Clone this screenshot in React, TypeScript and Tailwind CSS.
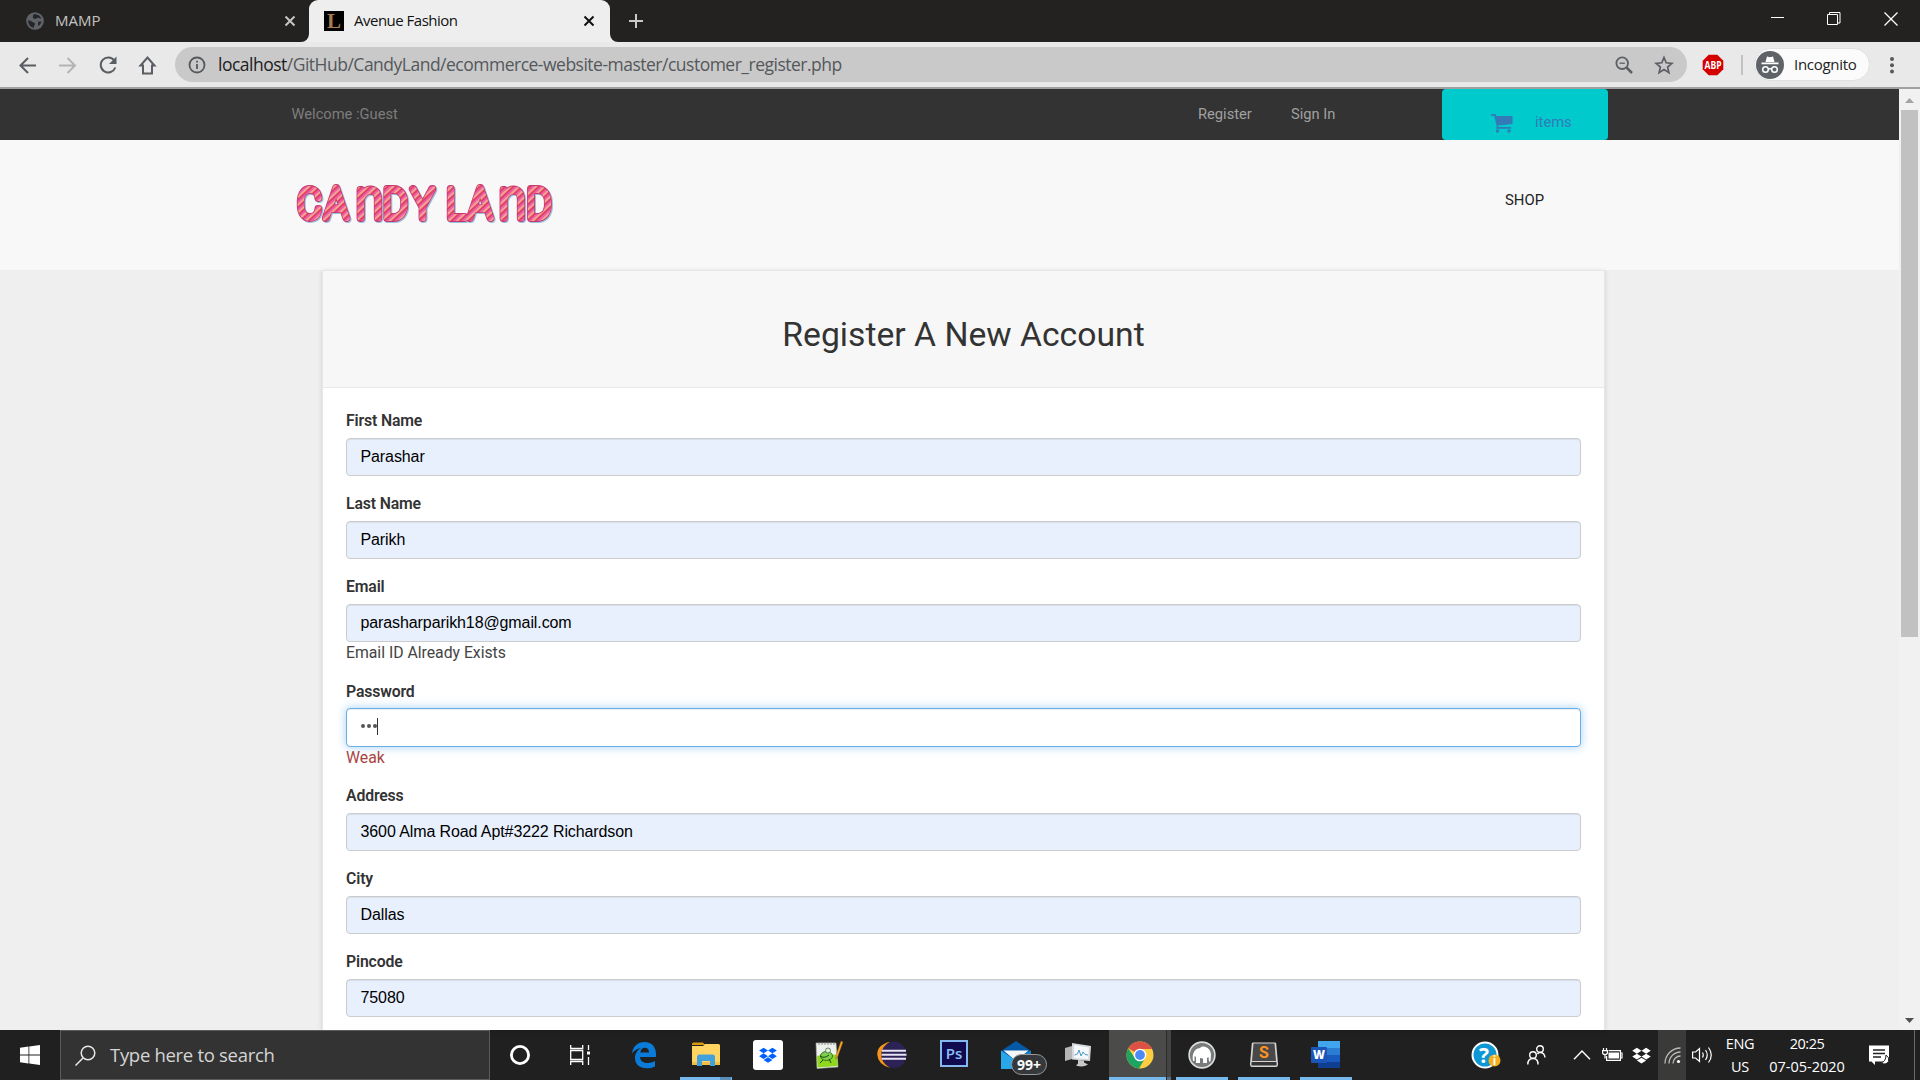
import React from "react";

type P = { children?: React.ReactNode };

const UI = "font-['Open_Sans','Noto_Sans',sans-serif]";

function LogoWords({ hidden }: { hidden?: boolean }) {
  return (
    <g transform="scale(0.9 1)" aria-hidden={hidden}>
      <text y="56.500" x="6.300 36.500 71 101.500 133"><tspan>C</tspan><tspan fontSize="42.500">A</tspan><tspan fontSize="54">n</tspan><tspan>DY</tspan></text>
      <text y="56.500" x="172 196.500 230 261"><tspan>L</tspan><tspan fontSize="42.500">A</tspan><tspan fontSize="54">n</tspan><tspan>D</tspan></text>
    </g>
  );
}

function Logo() {
  return (
    <svg width="270" height="84" viewBox="0 0 270 84" className="block" aria-label="Candy Land">
      <defs>
        <pattern id="candy" width="6" height="6" patternUnits="userSpaceOnUse" patternTransform="rotate(50)">
          <rect width="6" height="6" fill="#ee5fa6" />
          <rect width="2.4" height="6" fill="#f7a493" />
          <rect x="2.4" width="1.2" height="6" fill="#d3243f" />
        </pattern>
        <filter id="glow" x="-5%" y="-10%" width="112%" height="125%">
          <feDropShadow dx="1" dy="1" stdDeviation="0.6" floodColor="#7fb6dd" floodOpacity="0.8" />
        </filter>
      </defs>
      <g fontFamily="Roboto, sans-serif" fontWeight="100" fontSize="40.500" strokeLinejoin="round" strokeLinecap="round" filter="url(#glow)">
        <g fill="#c4386f" stroke="#c4386f" strokeWidth="7.800">
          <LogoWords />
        </g>
        <g fill="url(#candy)" stroke="url(#candy)" strokeWidth="6">
          <LogoWords hidden />
        </g>
      </g>
    </svg>
  );
}

function CloseX({ color }: { color: string }) {
  return (
    <svg width="12" height="12" viewBox="0 0 12 12" fill="none" stroke={color} strokeWidth="2">
      <path d="M1.5 1.5l9 9M10.5 1.5l-9 9" />
    </svg>
  );
}

function TabStrip() {
  return (
    <div className="flex h-[42px] bg-[#232220]">
      <div className="flex h-[42px] w-[309px] items-center pl-[26px] pr-[13px]">
        <svg width="18" height="18" viewBox="0 0 18 18">
          <circle cx="9" cy="9" r="8.8" fill="#5f6368" />
          <path d="M8 2.2c3-.4 6 1.2 7.2 4-1.6.6-2.2-.4-3.600-.4-1 0-1 1.200-2.400 1.200-1.600 0-2.400-1.200-2.400-2.400S7.200 3 8 2.200zM2 8.500c1.600 0 3.600.4 4.200 1.600 1.400.2 2.800.8 2.800 2 0 1.400-1.200 1.400-1.200 3.700C4.500 15.200 2 12.200 2 8.500zM12.500 9.500c1 .2 2.200.2 3 0-.3 1.800-1.500 3.500-3 4.500-.4-1.400-.8-3.500 0-4.500z" fill="#25262a" />
        </svg>
        <span className="ml-[11px] flex-1 pb-[2px] text-[15px] text-[#c3c3c3]">MAMP</span>
        <CloseX color="#c5c5c5" />
      </div>
      <div className="relative flex h-[42px] w-[301px] items-center rounded-t-[9px] bg-[#eeeeee] pl-[15px] pr-[15px]">
        <svg className="absolute -left-[8px] bottom-0" width="8" height="8" viewBox="0 0 8 8"><path d="M8 0v8H0a8 8 0 0 0 8-8z" fill="#eeeeee" /></svg>
        <svg className="absolute -right-[8px] bottom-0" width="8" height="8" viewBox="0 0 8 8"><path d="M0 0v8h8a8 8 0 0 1-8-8z" fill="#eeeeee" /></svg>
        <span className="flex h-5 w-5 items-center justify-center bg-black font-['Liberation_Serif',serif] text-[21px] font-bold leading-5 text-[#a97c50]">L</span>
        <span className="ml-[10px] flex-1 pb-[2px] text-[15px] tracking-[-0.5px] text-[#111]">Avenue Fashion</span>
        <CloseX color="#111111" />
      </div>
      <div className="flex items-center pl-[18px]">
        <svg width="16" height="16" viewBox="0 0 16 16" stroke="#c9c9c9" strokeWidth="2"><path d="M8 1v14M1 8h14" /></svg>
      </div>
      <div className="ml-auto flex h-[37px] items-center pr-[22px]">
        <svg width="14" height="14" viewBox="0 0 14 14"><path d="M0 5.500h13" stroke="#fff" /></svg>
        <svg className="ml-[42px]" width="14" height="14" viewBox="0 0 14 14" fill="none" stroke="#fff"><path d="M.5 2.500h10v10h-10zM2.500 2.500v-2h10.500v10.500h-2.500" /></svg>
        <svg className="ml-[43px]" width="14" height="14" viewBox="0 0 14 14" stroke="#fff" strokeWidth="1.300"><path d="M.5.5l13 13M13.500.5l-13 13" /></svg>
      </div>
    </div>
  );
}

function Toolbar() {
  return (
    <div className="flex h-[47px] items-start border-b-2 border-[#a0a0a0] bg-[#e9e9e9] pt-[5px]">
      <div className="flex h-[35px] w-[175px] items-center pl-[17px]">
        <svg width="144" height="24" viewBox="0 0 144 24" fill="none" strokeWidth="2">
          <path d="M19 12.500H4M11 5l-7.500 7.500L11 20" stroke="#5a5e63" />
          <path d="M42 12.500h16M50.500 5l7.500 7.500-7.500 7.500" stroke="#b3b3b3" />
          <path d="M97.300 7.500A7.500 7.500 0 1 0 98.300 14.500" stroke="#5a5e63" />
          <path d="M99.500 3.500v7.500H92z" fill="#5a5e63" />
          <path d="M123.500 12.500h2.500v8h9v-8h2.500l-7-8z" stroke="#5a5e63" />
        </svg>
      </div>
      <div className="flex h-[35px] w-[1512px] items-center rounded-full bg-[#c9c9c9] pl-[13px] pr-[13px]">
        <svg width="18" height="18" viewBox="0 0 18 18" fill="none" stroke="#55595d" strokeWidth="1.800"><circle cx="9" cy="9" r="7.500" /><path d="M9 8v5M9 4.700v1.800" /></svg>
        <span className="ml-[12px] flex-1 whitespace-nowrap text-[17.500px] tracking-[-0.5px] text-[#55585b]"><span className="text-[#1c1c1c]">localhost</span>/GitHub/CandyLand/ecommerce-website-master/customer_register.php</span>
        <svg width="18" height="18" viewBox="0 0 18 18" fill="none" stroke="#5c5f63" strokeWidth="1.800"><circle cx="7.200" cy="7.200" r="5.800" /><path d="M4.500 7.200h5.400" strokeWidth="1.300" /><path d="M11.500 11.500l5.500 5.500" strokeWidth="2.500" /></svg>
        <svg className="ml-[21px]" width="20" height="20" viewBox="0 0 20 20" fill="none" stroke="#5c5f63" strokeWidth="1.700"><path d="M10 2.500l2.200 5.300 5.700.5-4.300 3.700 1.300 5.600-4.900-3-4.900 3 1.300-5.600L2.100 8.300l5.700-.5z" /></svg>
      </div>
      <div className="flex h-[35px] items-center pl-[15px]">
        <svg width="22" height="22" viewBox="0 0 22 22"><path d="M6.700.8h8.600l6 6v8.400l-6 6H6.700l-6-6V6.800z" fill="#d40000" /><text x="11" y="14.700" textAnchor="middle" fontSize="10" fontWeight="700" fill="#fff" fontFamily="Open Sans" textLength="17" lengthAdjust="spacingAndGlyphs">ABP</text></svg>
        <span className="ml-[17px] h-5 w-[2px] bg-[#c2c2c2]" />
        <div className="ml-[11px] flex h-[33px] w-[116px] items-center rounded-full border border-[#e0e0e0] bg-[#fbfbfb] pl-[1px]">
          <svg width="28" height="28" viewBox="0 0 28 28"><circle cx="14" cy="14" r="14" fill="#5f6368" /><path d="M9.500 11l1.500-5.500 3 .8 3-.8L18.500 11zM5.500 11.600h17v1.600h-17z" fill="#fff" /><g fill="none" stroke="#fff" strokeWidth="1.500"><circle cx="9.500" cy="18.500" r="2.800" /><circle cx="18.500" cy="18.500" r="2.800" /><path d="M12.300 18.200q1.700-1 3.400 0" /></g></svg>
          <span className="ml-[10px] text-[15px] tracking-[-0.3px] text-[#222]">Incognito</span>
        </div>
        <svg className="ml-[18px]" width="8" height="20" viewBox="0 0 8 20" fill="#55595d"><circle cx="4" cy="4" r="2" /><circle cx="4" cy="10.200" r="2" /><circle cx="4" cy="16.400" r="2" /></svg>
      </div>
    </div>
  );
}

function Field({ label, value, note, noteColor }: { label: string; value: string; note?: string; noteColor?: string }) {
  return (
    <div className={note ? "h-[105px]" : "h-[83px]"}>
      <div className="h-[29px] pt-[1px] text-[15.800px] font-semibold leading-[21px] tracking-[-0.15px] text-[#333]">{label}</div>
      <div className="flex h-[38px] items-center rounded-[4px] border border-[#ccc] bg-[#e8f0fe] px-[13.500px] font-['Liberation_Sans',sans-serif] text-[16px] tracking-[-0.1px] text-black shadow-[inset_0_1px_1px_rgba(0,0,0,0.075)]">{value}</div>
      {note && <div className={noteColor + " text-[15.800px] leading-[21px] tracking-[-0.02px]"}>{note}</div>}
    </div>
  );
}

function PasswordField() {
  return (
    <div className="h-[104px]">
      <div className="h-[28px] pt-[1px] text-[15.800px] font-semibold leading-[21px] tracking-[-0.15px] text-[#333]">Password</div>
      <div className="flex h-[39px] items-center rounded-[4px] border border-[#66afe9] bg-white pl-[14px] shadow-[inset_0_1px_1px_rgba(0,0,0,0.075),0_0_10px_rgba(102,175,233,0.6)]">
        <div className="flex gap-[1.800px] pb-[3px]">
          <span className="h-[4px] w-[4px] rounded-full bg-[#555]" />
          <span className="h-[4px] w-[4px] rounded-full bg-[#555]" />
          <span className="h-[4px] w-[4px] rounded-full bg-[#555]" />
        </div>
        <span className="-mt-[2px] h-[17px] w-px bg-[#333]" />
      </div>
      <div className="text-[15.800px] leading-[21px] text-[#a94442]">Weak</div>
    </div>
  );
}

function Page() {
  return (
    <div className="flex h-[941px] font-[Roboto,sans-serif]">
      <div className="flex w-[1899px] flex-col bg-[#efefef]">
        <div className="flex h-[51px] shrink-0 bg-[#333] text-[14.700px]">
          <span className="w-[1198px] pl-[291.500px] pt-[14px] text-[#7d7d7d]">Welcome :Guest</span>
          <span className="w-[93px] pt-[14px] text-[#a0a0a0]">Register</span>
          <span className="w-[151px] pt-[14px] text-[#a0a0a0]">Sign In</span>
          <div className="flex h-[51px] w-[166px] items-start rounded-[4px] bg-[#00cacc] pl-[49px] text-[#337ab7]">
            <svg className="mt-[25px]" width="22" height="20" viewBox="0 0 22 20" fill="#337ab7"><path d="M0 0h4.500l.8 2H21.500v8L6.800 11.500l.4 1.500H20v1.800H5.200L5.700 12 3.200 1.800H0z" /><circle cx="6.500" cy="17" r="1.700" /><circle cx="18" cy="17" r="1.700" /></svg>
            <span className="ml-[22px] mt-[22px]">items</span>
          </div>
        </div>
        <div className="flex h-[130px] shrink-0 justify-between bg-[#f8f8f8]">
          <div className="pl-[292px] pt-[22px]"><Logo /></div>
          <span className="w-[394px] pt-[49px] text-[14.900px] leading-[22px] text-[#222]">SHOP</span>
        </div>
        <div className="ml-[322px] flex w-[1283px] flex-1 flex-col overflow-hidden border-x border-t border-[#e6e6e6] bg-white shadow-[0_1px_5px_rgba(0,0,0,0.12)]">
          <div className="flex h-[117px] shrink-0 items-center justify-center border-b border-[#e9e9e9] bg-[#f7f7f7] pt-[13px] text-[33.700px] text-[#333]">Register A New Account</div>
          <div className="px-[23px] pt-[21px]">
            <Field label="First Name" value="Parashar" />
            <Field label="Last Name" value="Parikh" />
            <Field label="Email" value="parasharparikh18@gmail.com" note="Email ID Already Exists" noteColor="text-[#444]" />
            <PasswordField />
            <Field label="Address" value="3600 Alma Road Apt#3222 Richardson" />
            <Field label="City" value="Dallas" />
            <Field label="Pincode" value="75080" />
          </div>
        </div>
      </div>
      <div className="flex w-[21px] flex-col items-center bg-[#f1f1f1]">
        <svg className="mt-[9px] shrink-0" width="9" height="5" viewBox="0 0 9 5"><path d="M0 5l4.500-5L9 5z" fill="#a3a3a3" /></svg>
        <div className="mt-[7px] h-[527px] w-[17px] bg-[#c1c1c1]" />
        <svg className="mt-auto mb-[7px]" width="9" height="5" viewBox="0 0 9 5"><path d="M0 0l4.500 5L9 0z" fill="#505050" /></svg>
      </div>
    </div>
  );
}

function Slot({ children, line, active }: P & { line?: boolean; active?: boolean }) {
  return (
    <div className={"relative flex h-[50px] w-[62px] items-center justify-center " + (active ? "bg-[#4b4b4a]" : "")}>
      {children}
      {line && <span className={"absolute bottom-0 h-[3px] bg-[#76b9ed] " + (active ? "inset-x-0" : "inset-x-[5px]")} />}
      {active && <span className="absolute inset-y-0 right-0 w-[5px] border-l border-[#2c2c2b] bg-[#3f3f3e]/60" />}
    </div>
  );
}

const dropboxPath = "M6 1l6 3.800-6 3.800L0 4.800zM18 1l6 3.800-6 3.800-6-3.800zM6 8.600l6 3.800-6 3.800-6-3.800zM18 8.600l6 3.800-6 3.800-6-3.800zM12 13.800l6 3.800-6 3.800-6-3.800z";

function TaskIcons() {
  return (
    <>
      <div className="flex w-[61px] items-center justify-center pr-[2px]"><svg width="22" height="22" viewBox="0 0 22 22"><circle cx="11" cy="11" r="8.600" fill="none" stroke="#fff" strokeWidth="2.800" /></svg></div>
      <div className="flex w-[62px] items-center justify-center pr-1"><svg width="20" height="20" viewBox="0 0 20 20" fill="none" stroke="#fff" strokeWidth="1.300"><path d="M.7 0v3.500h12V0M.7 5.500h12v9H.7zM.7 20v-3.500h12V20M18.500 0v5M18.500 12v8" /><path d="M17 6.500h3v3h-3z" fill="#fff" stroke="none" /></svg></div>
      <Slot><svg width="26" height="28" viewBox="0 0 26 28"><path d="M1 12.500C2 5 7 1 13.500 1 21 1 25 6 25 13v3H9c.3 4.500 4 6 7.500 6 3 0 5.500-.8 7.500-2v5.500c-2.500 1.300-5.500 1.800-8.500 1.800C8.500 27.300 4 23 4 17c0-4.500 2.500-8 6-10-4 .5-7 2.700-9 5.500zM9.300 11.500H18c0-3-1.600-4.700-4.200-4.700-2.500 0-4.100 2-4.500 4.700z" fill="#0a7bd8" /></svg></Slot>
      <div className="relative"><Slot line><svg width="28" height="26" viewBox="0 0 28 26"><path d="M0 2q0-1.500 1.500-1.500H11l2 2.500H0z" fill="#d99a10" /><path d="M0 4h11l2-2h13.500Q28 2 28 3.500V23H0z" fill="#ffd461" /><path d="M0 20h28v3H0z" fill="#f2bf46" /><path d="M5 24v-9q0-2.500 2.500-2.500h13q2.500 0 2.500 2.500v9h-5v-5h-8v5z" fill="#42a1db" /></svg></Slot><span className="absolute bottom-0 right-[6px] h-[3px] w-[11px] bg-[#5b8fb8]" /></div>
      <Slot><div className="flex h-[30px] w-[30px] items-center justify-center rounded-[3px] bg-white"><svg width="18" height="17" viewBox="0 0 24 23"><path d={dropboxPath} fill="#0061ff" /></svg></div></Slot>
      <Slot><svg width="30" height="28" viewBox="0 0 30 28"><path d="M1 2l20 0 2 24-21 1.500z" fill="#eef0ec" stroke="#aaa" strokeWidth=".6" /><path d="M2 15q9-3 20-1l.8 11-20.300 1.500z" fill="#8fd81f" /><path d="M4 1v3M7 1v3M10 1v3M13 1v3M16 1v3M19 1v3" stroke="#777" strokeWidth=".8" /><ellipse cx="11.500" cy="15" rx="6" ry="4.500" fill="#7fd04a" stroke="#245b12" strokeWidth=".8" /><circle cx="13" cy="9.500" r="2.500" fill="#dff5cf" stroke="#355" strokeWidth=".7" /><path d="M5 15q4 3 9-1M8 19l-3 3M14 18l2 4" stroke="#17440d" fill="none" /><path d="M28 1l-5 14-2 3 0-4 5-14z" fill="#f0a52c" stroke="#8c4a10" strokeWidth=".4" /></svg></Slot>
      <Slot><svg width="30" height="28" viewBox="0 0 30 28"><ellipse cx="17" cy="13.800" rx="12.500" ry="13.200" fill="#2c2255" /><path d="M13 .8Q-.3 4 .3 13.800T13 26.800Q4.200 22 4.200 13.800T13 .8z" fill="#f7941e" /><path d="M4.800 9.800h24.200M4.500 13.800h25M4.800 17.800h24.200" stroke="#e6e4f2" strokeWidth="1.900" /></svg></Slot>
      <Slot><div className="-mt-1 flex h-[27px] w-[28px] items-center justify-center border-2 border-[#86b8f0] bg-[#100b4e] text-[15px] font-semibold text-[#8ac1fa]">Ps</div></Slot>
      <Slot>
        <svg width="30" height="28" viewBox="0 0 30 28"><path d="M0 10L15 0l15 10v18H0z" fill="#0559a6" /><path d="M2.500 9.500h25L15 20z" fill="#f5f6f7" /><path d="M0 9.500L20 23v5H0z" fill="#28a8ea" /><path d="M30 9.500L12 19v9h18z" fill="#1682c7" /></svg>
        <span className="absolute left-[26px] top-[24px] flex h-[21px] w-[36px] items-center justify-center rounded-full border border-[#999] bg-[#35393b] text-[14px] font-bold text-white">99+</span>
      </Slot>
      <Slot><svg width="28" height="26" viewBox="0 0 28 26"><path d="M1 6l7-2v13l-7 2z" fill="#b5b5b5" /><path d="M8 1l19 3-1 15-18-1.500z" fill="#d7d7d7" /><path d="M10 3l15 2.500-.8 11.500L10 16z" fill="#f4f8fb" /><path d="M10.500 13l3-1 1.500-4 2 6 2-4 2 2.500 3 .5" fill="none" stroke="#4d9ac2" strokeWidth="1" /><path d="M14 18l6 .5v2l4 2q-5 3.500-12 1l2-2z" fill="#c9c9c9" /></svg></Slot>
      <Slot line active><svg className="-ml-[1px]" width="28" height="28" viewBox="0 0 28 28"><circle cx="14" cy="14" r="13.500" fill="#ffcd40" /><path d="M14 14L2.300 7.250A13.500 13.500 0 0 1 25.700 7.250L26 8H14z" fill="#dd5144" /><path d="M2.300 7.250A13.500 13.500 0 0 0 13 27.500l6.200-10.500L14 20l-5.200-3z" fill="#1da462" /><circle cx="14" cy="14" r="6.300" fill="#fff" /><circle cx="14" cy="14" r="4.900" fill="#4c8bf5" /></svg></Slot>
      <Slot line><svg width="28" height="28" viewBox="0 0 28 28"><circle cx="14" cy="14" r="12.900" fill="#777b7c" stroke="#ddd" strokeWidth="1.600" /><path d="M5 20q-1-6 1-9 1.500-3.500 6-4 1.500-2 5-1.200 5 1.200 6 7.200l-.5 7.500h-1.500L20.500 16l-1.500 1v5h-4v-4.500l-3-.5V22H8v-6l-1.500-1L6.500 20z" fill="#fff" /></svg></Slot>
      <Slot line><svg width="28" height="26" viewBox="0 0 28 26"><path d="M3 .5h22q1 0 1.200 1L28 22q0 3-2 3H2q-2 0-2-3L1.800 1.500Q2 .5 3 .5z" fill="#d5d5d5" /><path d="M3.500 1.500h21L26 19H2z" fill="#484848" /><path d="M1.500 20h25v3.500h-25z" fill="#353535" /><text x="14" y="15.500" textAnchor="middle" fontSize="16" fontWeight="700" fontFamily="Roboto" fill="#ff9320">S</text></svg></Slot>
      <Slot line><svg width="30" height="28" viewBox="0 0 30 28"><path d="M7 0h22v7H7z" fill="#41a5ee" /><path d="M7 7h22v7H7z" fill="#2b7cd3" /><path d="M7 14h22v7H7z" fill="#185abd" /><path d="M7 21h22v6H7z" fill="#103f91" /><rect y="6" width="16" height="16" rx="1" fill="#1a56b8" /><text x="8" y="18" textAnchor="middle" fontSize="11.500" fontWeight="800" fill="#fff" fontFamily="Open Sans">W</text></svg></Slot>
    </>
  );
}

function Tray() {
  return (
    <div className="ml-auto flex w-[463px] items-center pl-[14px]">
      <svg width="30" height="28" viewBox="0 0 30 28"><circle cx="14" cy="14" r="12.500" fill="#0f96d4" stroke="#fff" strokeWidth="2" /><text x="13" y="21.500" textAnchor="middle" fontSize="21" fontWeight="700" fill="#fff" fontFamily="Open Sans">?</text><circle cx="23.500" cy="19.500" r="6" fill="#f5b01d" /><text x="23.500" y="23.800" textAnchor="middle" fontSize="11.500" fontWeight="700" fill="#fff" fontFamily="Open Sans">i</text></svg>
      <svg className="ml-[26px]" width="19" height="20" viewBox="0 0 19 20" fill="none" stroke="#fff" strokeWidth="1.400"><circle cx="6" cy="10" r="3.300" /><path d="M.8 19.500q0-6 5.200-6t5 6" /><circle cx="13" cy="4" r="3.300" /><path d="M10.500 9q1-1.500 2.500-1.500 4.500 0 5 5" /></svg>
      <svg className="ml-[27px]" width="18" height="10" viewBox="0 0 18 10" fill="none" stroke="#fff" strokeWidth="1.400"><path d="M1 9.300l8-8.300 8 8.300" /></svg>
      <svg className="ml-[11px]" width="21" height="15" viewBox="0 0 21 15" fill="none" stroke="#fff" strokeWidth="1.200"><path d="M6.600 2.600h11.800v9.800H4.600V8M18.500 5h1.500v5h-1.500M1.500 0v2.500M4.500 0v2.500M.6 2.600h4.800v2q0 2-2.400 2t-2.400-2zM3 6.600v4" /><path d="M6.500 4.500h10.500v6H6.500z" fill="#fff" stroke="none" /></svg>
      <svg className="ml-[9px]" width="19" height="17" viewBox="0 0 24 22"><path d={dropboxPath} fill="#fff" /></svg>
      <div className="ml-[7px] flex h-[50px] w-[28px] items-center justify-center bg-[#3a3a39]"><svg width="17" height="17" viewBox="0 0 17 17" fill="none" stroke="#bbb" strokeWidth="1.300"><path d="M1 16.500A15.500 15.500 0 0 1 16.500 1M5 16.500A11.500 11.500 0 0 1 16.500 5M9 16.500A7.500 7.500 0 0 1 16.500 9" /><circle cx="14.500" cy="14.500" r="1.600" fill="#fff" stroke="none" /></svg></div>
      <svg className="ml-[6px]" width="21" height="18" viewBox="0 0 21 18" fill="none" stroke="#fff" strokeWidth="1.200"><path d="M.6 6h3L7.500 2.500v13L3.600 12h-3z" /><path d="M10.500 6.500q1.500 2.500 0 5M13.500 4q3.500 5 0 10M16.500 1.500q5.500 7.500 0 15" /></svg>
      <div className="ml-[10px] w-[34px] text-center text-[14.500px] leading-[23px] tracking-[-0.3px]"><div>ENG</div><div>US</div></div>
      <div className="ml-[10px] w-[80px] whitespace-nowrap text-center text-[14.500px] leading-[23px]"><div className="tracking-[-0.5px]">20:25</div><div>07-05-2020</div></div>
      <svg className="ml-[22px]" width="21" height="21" viewBox="0 0 21 21"><path d="M0 .5h20v16H6V20l-3.500-3.500H0z" fill="#fff" /><path d="M4 5h12M4 8.500h12M4 12h8" stroke="#222" strokeWidth="1.300" /><path d="M17 10q4 2.500 2.500 6.500-2.500 4-7.500 1.500 5-1.500 5-8z" fill="#fff" stroke="#222" /></svg>
      <span className="ml-auto mr-[5px] h-[50px] w-px bg-[#6a6a69]" />
    </div>
  );
}

export default function App() {
  return (
    <div className={"h-[1080px] w-[1920px] overflow-hidden bg-white " + UI}>
      <TabStrip />
      <Toolbar />
      <Page />
      <div className="flex h-[50px] bg-[#1f201f] text-white">
        <div className="flex w-[60px] items-center justify-center"><svg width="20" height="20" viewBox="0 0 20 20" fill="#fff"><path d="M0 2.800L8.500 1.600v8H0zM9.300 1.500L20 0v9.600H9.300zM0 10.400h8.500v8L0 17.200zM9.300 10.400H20V20L9.300 18.500z" /></svg></div>
        <div className="flex w-[430px] items-center border border-[#5b5b5b] bg-[#333] pl-[14px]">
          <svg width="21" height="21" viewBox="0 0 21 21" fill="none" stroke="#e8e8e8" strokeWidth="1.500"><circle cx="13" cy="8" r="6.800" /><path d="M8 13l-7.500 7.500" /></svg>
          <span className="ml-[14px] text-[18.500px] tracking-[-0.3px] text-[#d5d5d5]">Type here to search</span>
        </div>
        <TaskIcons />
        <Tray />
      </div>
    </div>
  );
}
